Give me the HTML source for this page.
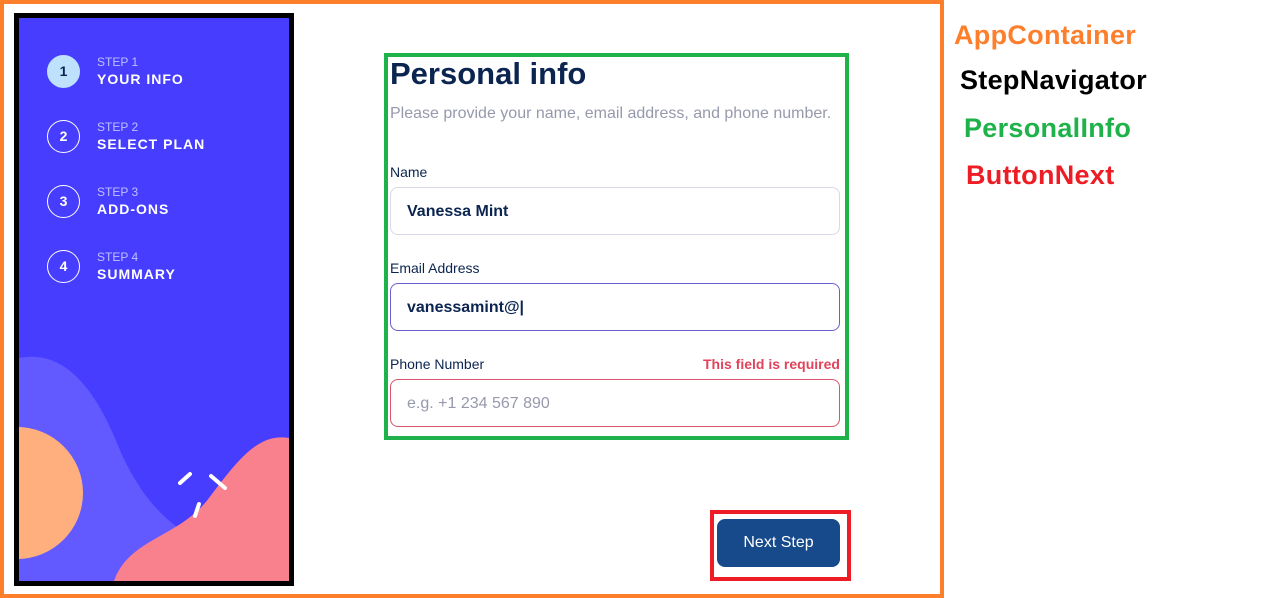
<!DOCTYPE html>
<html><head><meta charset="utf-8"><style>
*{box-sizing:border-box;margin:0;padding:0}
body{width:1278px;height:598px;background:#fff;font-family:"Liberation Sans",sans-serif;position:relative;overflow:hidden}
.abs{position:absolute}
.app{left:0;top:0;width:944px;height:598px;border:4px solid #fd7f2c}
.nav{left:14px;top:13px;width:280px;height:573px;border:5px solid #000;background:#473dff;overflow:hidden}
.step{position:absolute;left:28px;color:#fff}
.circ{position:absolute;left:0;top:0;width:33px;height:33px;border:1px solid #fff;border-radius:50%;text-align:center;line-height:31px;font-size:14px;font-weight:bold}
.st{position:absolute;left:50px;top:0px;font-size:12px;color:#bfc0ff;white-space:nowrap}
.sn{position:absolute;left:50px;top:16px;font-size:14px;font-weight:bold;letter-spacing:1px;white-space:nowrap}
.green{left:384px;top:53px;width:465px;height:387px;border:4px solid #1fb24a}
.lbl{font-size:14px;color:#0b2550}
.inp{position:absolute;left:390px;width:450px;height:48px;border:1px solid #d6d9e6;border-radius:8px;padding-left:16px;line-height:48px;font-size:16px;font-weight:bold;color:#0b2550}
.tag{font-size:27px;font-weight:bold;white-space:nowrap;letter-spacing:0.3px}
</style></head><body>
<div class="abs app"></div>
<div class="abs nav">
 <svg class="abs" style="left:0;top:0" width="270" height="563" viewBox="0 0 270 563">
  <path d="M0 340 C50 330 80 380 100 430 C130 500 170 520 200 530 L200 563 L0 563Z" fill="#6259ff"/>
  <circle cx="-2" cy="475" r="66" fill="#ffaf7e"/>
  <path d="M95 563 C110 520 160 520 190 480 C220 440 240 415 270 420 L270 563Z" fill="#f9818e"/>
  <g stroke="#fff" stroke-width="4" stroke-linecap="round"><line x1="161" y1="465" x2="171" y2="456"/><line x1="192" y1="458" x2="206" y2="470"/><line x1="180" y1="486" x2="176" y2="498"/></g>
 </svg>
 <div class="step" style="top:37px"><div class="circ" style="background:#bee2fd;border-color:#bee2fd;color:#0b2550">1</div><div class="st">STEP 1</div><div class="sn">YOUR INFO</div></div>
 <div class="step" style="top:102px"><div class="circ">2</div><div class="st">STEP 2</div><div class="sn">SELECT PLAN</div></div>
 <div class="step" style="top:167px"><div class="circ">3</div><div class="st">STEP 3</div><div class="sn">ADD-ONS</div></div>
 <div class="step" style="top:232px"><div class="circ">4</div><div class="st">STEP 4</div><div class="sn">SUMMARY</div></div>
</div>
<div class="abs green"></div>
<div class="abs" style="left:390px;top:56px;font-size:31px;font-weight:bold;color:#0b2550">Personal info</div>
<div class="abs" style="left:390px;top:105px;font-size:16px;color:#9699ab;white-space:nowrap">Please provide your name, email address, and phone number.</div>
<div class="abs lbl" style="left:390px;top:164px">Name</div>
<div class="inp" style="top:187px">Vanessa Mint</div>
<div class="abs lbl" style="left:390px;top:260px">Email Address</div>
<div class="inp" style="top:283px;border-color:#6a5fd0">vanessamint@|</div>
<div class="abs lbl" style="left:390px;top:356px">Phone Number</div>
<div class="abs" style="left:703px;top:356px;font-size:14px;font-weight:bold;color:#e0435a">This field is required</div>
<div class="inp" style="top:379px;border-color:#d9546a;font-weight:normal;color:#9699ab">e.g. +1 234 567 890</div>
<div class="abs" style="left:710px;top:510px;width:141px;height:71px;border:4px solid #ee1c25"></div>
<div class="abs" style="left:717px;top:519px;width:123px;height:48px;background:#174a8b;border-radius:8px;color:#fff;font-size:16px;text-align:center;line-height:48px">Next Step</div>
<div class="abs tag" style="left:954px;top:20px;color:#fd7f2c">AppContainer</div>
<div class="abs tag" style="left:960px;top:65px;color:#000">StepNavigator</div>
<div class="abs tag" style="left:964px;top:113px;color:#1fb24a">PersonalInfo</div>
<div class="abs tag" style="left:966px;top:160px;color:#ee1c25">ButtonNext</div>
</body></html>
